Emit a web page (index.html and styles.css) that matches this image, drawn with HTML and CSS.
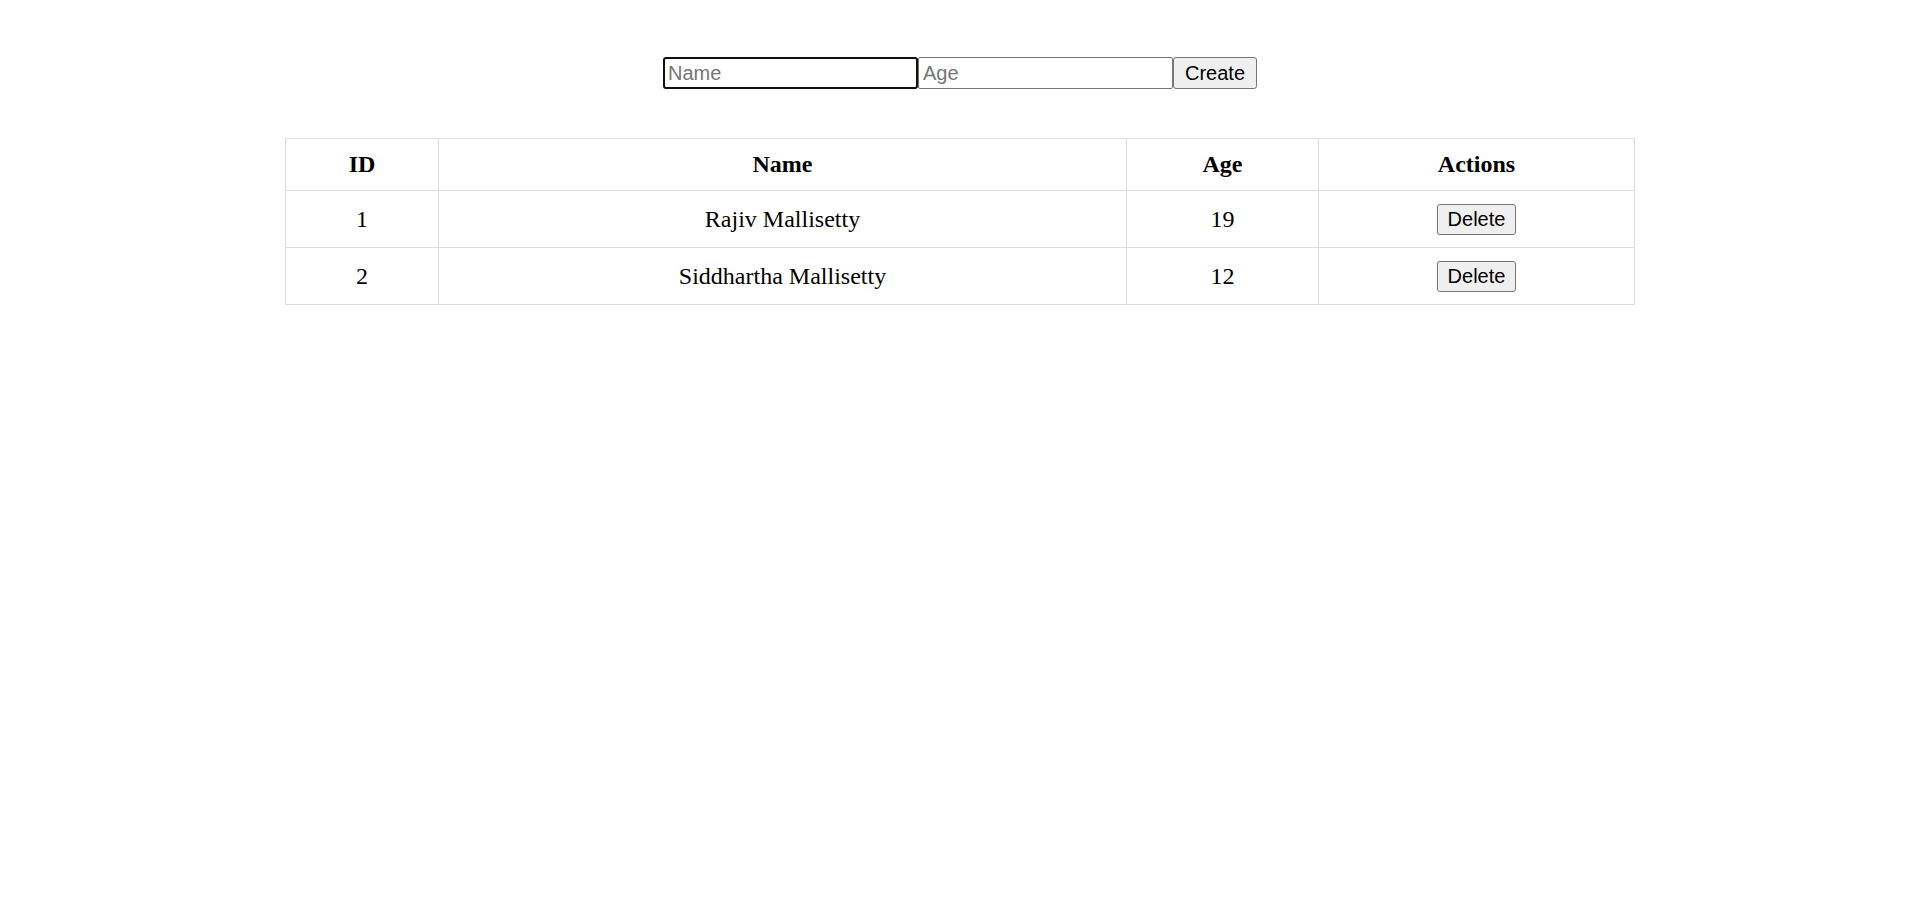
FILE: index.html
```html
<!DOCTYPE html>
<html>
<head>
<meta charset="utf-8">
<title>Users</title>
<link rel="stylesheet" href="styles.css">
</head>
<body>
<div class="app">
  <form class="create-form">
    <input class="field field-focused" type="text" placeholder="Name"><input class="field" type="text" placeholder="Age"><button class="btn btn-create" type="button">Create</button>
  </form>
  <table class="users">
    <colgroup>
      <col class="c-id">
      <col class="c-name">
      <col class="c-age">
      <col class="c-actions">
    </colgroup>
    <thead>
      <tr><th>ID</th><th>Name</th><th>Age</th><th>Actions</th></tr>
    </thead>
    <tbody>
      <tr><td>1</td><td>Rajiv Mallisetty</td><td>19</td><td><button class="btn btn-delete" type="button">Delete</button></td></tr>
      <tr><td>2</td><td>Siddhartha Mallisetty</td><td>12</td><td><button class="btn btn-delete" type="button">Delete</button></td></tr>
    </tbody>
  </table>
</div>
</body>
</html>
```
FILE: styles.css
```css
html, body {
  background: #ffffff;
}
body {
  margin: 8px;
  font-family: "Liberation Serif", "Times New Roman", serif;
  color: #000;
}
.app {
  display: flex;
  flex-direction: column;
  align-items: center;
}
.create-form {
  display: flex;
  align-items: flex-start;
  margin: 49px 0 0 0;
}
.field {
  box-sizing: border-box;
  width: 255px;
  height: 32px;
  margin: 0;
  padding: 1px 4px;
  font-family: "Liberation Sans", Arial, sans-serif;
  font-size: 20px;
  color: #000;
  background: #fff;
  border: 1px solid #767676;
  border-radius: 2px;
}
.field::placeholder {
  color: #757575;
}
.field-focused {
  border: 2px solid #101010;
  border-radius: 3px;
  padding: 0 3px;
  caret-color: #000;
}
.field:focus {
  outline: none;
}
.btn {
  box-sizing: border-box;
  margin: 0;
  padding: 1px 6px;
  font-family: "Liberation Sans", Arial, sans-serif;
  font-size: 20px;
  color: #000;
  background: #efefef;
  border: 1px solid #767676;
  border-radius: 3px;
}
.btn-create {
  width: 84px;
  height: 32px;
}
.btn-delete {
  width: 79px;
  height: 31px;
  vertical-align: top;
  margin-top: 1px;
}
.users {
  margin-top: 49px;
  width: 1349px;
  table-layout: fixed;
  border-collapse: collapse;
  font-size: 24px;
}
.c-id { width: 153px; }
.c-name { width: 688px; }
.c-age { width: 192px; }
.c-actions { width: 316px; }
.users th,
.users td {
  border: 1px solid #dddddd;
  padding: 12px;
  text-align: center;
}
.users th {
  font-weight: bold;
  line-height: 27px;
}
.users td {
  line-height: 32px;
}
```
